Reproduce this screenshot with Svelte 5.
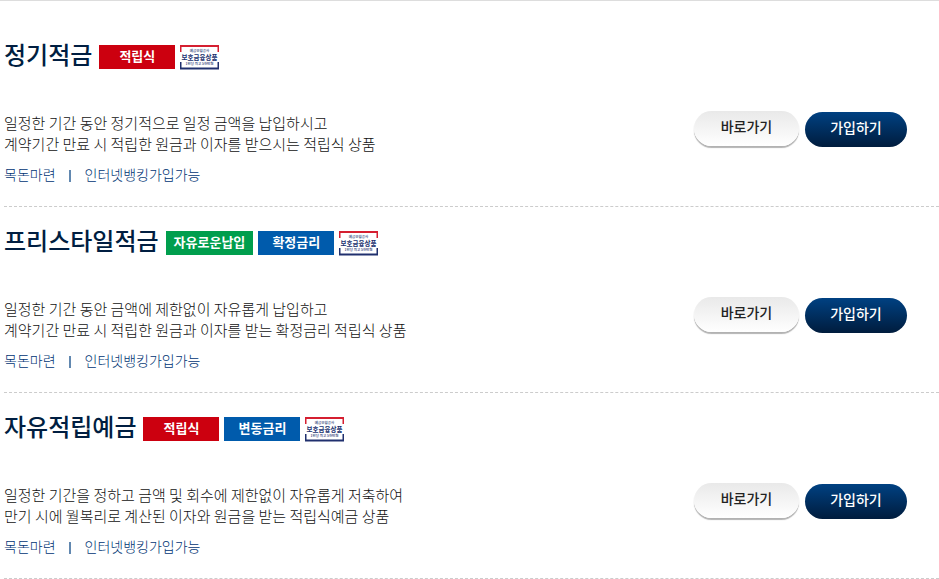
<script>
    const products = [
        {
            name: '정기적금',
            tags: [{ text: '적립식', color: 'red' }],
            desc: ['일정한 기간 동안 정기적으로 일정 금액을 납입하시고', '계약기간 만료 시 적립한 원금과 이자를 받으시는 적립식 상품']
        },
        {
            name: '프리스타일적금',
            tags: [{ text: '자유로운납입', color: 'green' }, { text: '확정금리', color: 'blue' }],
            desc: ['일정한 기간 동안 금액에 제한없이 자유롭게 납입하고', '계약기간 만료 시 적립한 원금과 이자를 받는 확정금리 적립식 상품']
        },
        {
            name: '자유적립예금',
            tags: [{ text: '적립식', color: 'red' }, { text: '변동금리', color: 'blue' }],
            desc: ['일정한 기간을 정하고 금액 및 회수에 제한없이 자유롭게 저축하여', '만기 시에 월복리로 계산된 이자와 원금을 받는 적립식예금 상품']
        }
    ];
    const features = ['목돈마련', '인터넷뱅킹가입가능'];
</script>

<ul class="products">
    {#each products as product}
    <li class="product">
        <div class="head">
            <h3>{product.name}</h3>
            {#each product.tags as tag}
            <span class="tag {tag.color}">{tag.text}</span>
            {/each}
            <svg class="insured" viewBox="0 0 78 52" role="img" aria-label="예금보험공사 보호금융상품">
                <path d="M0 2H78V16H75V6H3V16H0Z" fill="#d51f30" />
                <path d="M0 36H3V47H75V36H78V51H0Z" fill="#20306e" />
                <text class="small" x="39" y="15">예금보험공사</text>
                <text class="main" x="39" y="31">보호금융상품</text>
                <text class="small" x="39" y="42">1인당 최고 5천만원</text>
            </svg>
        </div>
        <div class="body">
            <div class="info">
                <p class="desc">{product.desc[0]}<br>{product.desc[1]}</p>
                <ul class="features">
                    {#each features as feature}
                    <li>{feature}</li>
                    {/each}
                </ul>
            </div>
            <div class="buttons">
                <button type="button" class="go">바로가기</button>
                <button type="button" class="join">가입하기</button>
            </div>
        </div>
    </li>
    {/each}
</ul>

<style>
    :global(body){
        margin: 0;
        background: #fff;
        font-family: "Noto Sans CJK KR", "Noto Sans", sans-serif;
    }

    ul{
        margin: 0;
        padding: 0;
        list-style: none;
    }

    .products{
        border-top: 1px solid #ddd;
        padding: 20px 0 0 4px;
    }

    .product{
        padding: 20px 0;
        border-bottom: 1px dashed #ccc;
    }

    .head{
        display: flex;
        align-items: center;
        height: 32px;
        margin-bottom: 38px;
    }

    h3{
        margin: 0 7px 6px 0;
        font-size: 24px;
        line-height: 32px;
        font-weight: 500;
        color: #001e41;
        white-space: nowrap;
    }

    .tag{
        box-sizing: border-box;
        min-width: 76px;
        height: 24px;
        margin-right: 5px;
        padding: 0 8px;
        font-size: 13px;
        line-height: 22px;
        font-weight: 700;
        text-align: center;
        color: #fff;
        white-space: nowrap;
    }

    .red{
        background: #cc000f;
    }

    .green{
        background: #009e4d;
    }

    .blue{
        background: #005bac;
    }

    .insured{
        width: 39px;
        height: 26px;
        flex: none;
    }

    .insured text{
        text-anchor: middle;
        fill: #20306e;
    }

    .insured .main{
        font-size: 13px;
        font-weight: 700;
    }

    .insured .small{
        font-size: 7px;
        font-weight: 500;
    }

    .body{
        display: flex;
        justify-content: space-between;
        align-items: flex-start;
        padding-right: 32px;
    }

    .desc{
        margin: 1px 0 10px;
        font-size: 15px;
        line-height: 21px;
        font-weight: 300;
        color: #111;
    }

    .features{
        display: flex;
        margin-bottom: 1px;
        font-size: 14px;
        line-height: 21px;
        font-weight: 300;
        color: #003474;
    }

    .features li{
        display: flex;
        align-items: center;
    }

    .features li + li::before{
        content: "";
        width: 2px;
        height: 12px;
        margin: 2px 14px 0 13px;
        background: #6288b0;
    }

    .buttons{
        display: flex;
        align-items: flex-start;
        gap: 6px;
    }

    button{
        box-sizing: border-box;
        border: 0;
        border-radius: 18px;
        font-family: inherit;
        font-size: 14px;
        line-height: 20px;
        font-weight: 500;
        white-space: nowrap;
        cursor: pointer;
    }

    .go{
        width: 105px;
        height: 35px;
        padding: 0 0 6px;
        color: #222;
        background: linear-gradient(#e9e9e9, #fff);
        box-shadow: 0 2px 1px rgba(0, 0, 0, 0.3);
    }

    .join{
        width: 102px;
        height: 35px;
        margin-top: 1px;
        padding: 0 0 6px;
        color: #fff;
        background: linear-gradient(#004182, #001c3d);
    }
</style>
